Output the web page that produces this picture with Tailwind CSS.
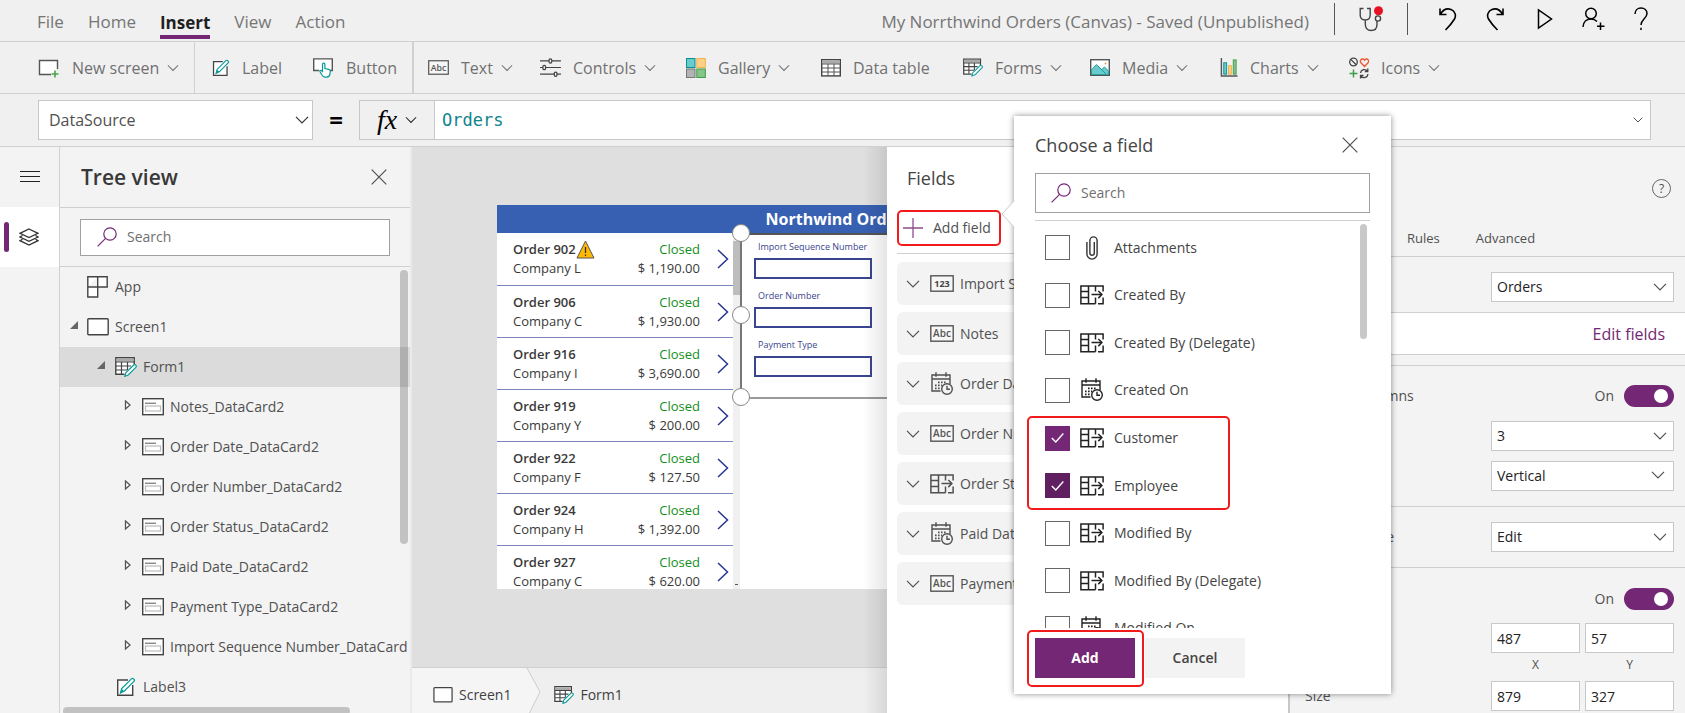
<!DOCTYPE html>
<html lang="en">
<head>
<meta charset="utf-8">
<title>My Norrthwind Orders (Canvas)</title>
<script src="https://cdn.jsdelivr.net/npm/@tailwindcss/browser@4"></script>
</head>
<body class="relative flex h-screen flex-col overflow-hidden bg-[#f0f0f0] font-['Open_Sans','Noto_Sans',sans-serif] text-sm text-[#505050]">

<svg class="hidden" aria-hidden="true">
  <symbol id="chev" viewBox="0 0 14 8"><path d="M1 .8l6 6 6-6" fill="none" stroke="currentColor" stroke-width="1.2"/></symbol>
  <symbol id="x" viewBox="0 0 16 16"><path d="M.7.7l14.6 14.6M15.3.7L.7 15.3" fill="none" stroke="currentColor" stroke-width="1.2"/></symbol>
  <symbol id="glass" viewBox="0 0 20 20"><g fill="none" stroke="#742774" stroke-width="1.2"><circle cx="13" cy="7" r="6.2"/><path d="M8.6 11.4L.6 19.4"/></g></symbol>
  <symbol id="screen" viewBox="0 0 22 18"><rect x=".8" y=".8" width="20.4" height="16" rx=".8" fill="#fff" stroke="#444" stroke-width="1.4"/></symbol>
  <symbol id="newscreen" viewBox="0 0 22 20"><path d="M13 16.5H1.5V2.5h18V11" fill="#fff" stroke="#555" stroke-width="1.4"/><path d="M17 12.5v7M13.5 16h7" stroke="#4aa64a" stroke-width="1.6"/></symbol>
  <symbol id="label" viewBox="0 0 20 20"><path d="M12 3H1.7v15.3h15V8" fill="#fff" stroke="#444" stroke-width="1.4"/><path d="M4.5 16l1.2-4.4L15.4 1.9a1.5 1.5 0 0 1 2.1 0l.4.4a1.5 1.5 0 0 1 0 2.1L8.4 14z" fill="#fff" stroke="#0a9a9a" stroke-width="1.3"/><path d="M4.4 16l1.2-4 2.8 2.2z" fill="#0a9a9a"/></symbol>
  <symbol id="button" viewBox="0 0 22 20"><path d="M7 12.5H1.7V.9h18.6v11.6H17" fill="#fff" stroke="#555" stroke-width="1.4"/><path d="M10.5 13.5V6.3a1.2 1.2 0 0 1 2.4 0v4.2l4 .9c1 .2 1.5.8 1.4 1.8l-.4 3c-.3 1.900-1.600 3-3.300 3h-1.400c-1.400 0-2.200-.6-2.900-1.700l-2.400-4c-.4-.9.9-1.700 1.700-.8z" fill="#fff" stroke="#0a9a9a" stroke-width="1.2"/></symbol>
  <symbol id="abc" viewBox="0 0 24 17"><rect x=".8" y=".8" width="22.400" height="15.400" fill="#f6f6f6" stroke="#555" stroke-width="1.4"/><text x="12" y="12" text-anchor="middle" font-family="Open Sans" font-weight="600" font-size="10" fill="#555">Abc</text></symbol>
  <symbol id="num" viewBox="0 0 24 17"><rect x=".8" y=".8" width="22.400" height="15.400" fill="#f6f6f6" stroke="#555" stroke-width="1.4"/><text x="12" y="12" text-anchor="middle" font-family="Open Sans" font-weight="700" font-size="9" fill="#444">123</text></symbol>
  <symbol id="controls" viewBox="0 0 22 20"><g fill="#f0f0f0" stroke="#444" stroke-width="1.3"><path d="M0 3h22M0 10h22M0 17h22"/><rect x="9.500" y=".8" width="2.800" height="4.500" rx="1.300"/><rect x="3" y="7.800" width="2.800" height="4.500" rx="1.300"/><rect x="15" y="14.800" width="2.800" height="4.500" rx="1.300"/></g></symbol>
  <symbol id="gallery" viewBox="0 0 20 20"><g stroke-width="1"><rect x=".5" y=".5" width="8.500" height="9" fill="#69cccc" stroke="#0a8f8f"/><rect x="10.800" y=".5" width="8.500" height="9" fill="#fbd089" stroke="#f2b24d"/><rect x=".5" y="11" width="8.500" height="8.500" fill="#b3b3b3" stroke="#777"/><rect x="10.800" y="11" width="8.500" height="8.500" fill="#87c587" stroke="#3f9d4a"/></g></symbol>
  <symbol id="table" viewBox="0 0 20 18"><rect x=".7" y=".7" width="18.600" height="16.200" fill="#fff" stroke="#444" stroke-width="1.400"/><path d="M1.400 1.400h17.200v3.200H1.400z" fill="#aaa"/><path d="M1 5h18M1 9h18M1 13h18M7 5v12M13 5v12" stroke="#555" fill="none"/></symbol>
  <symbol id="form" viewBox="0 0 22 20"><path d="M9.500 17.200H.8V.8h18.400v7" fill="#fff" stroke="#444" stroke-width="1.400"/><path d="M1.500 1.500h17v3h-17z" fill="#aaa"/><path d="M1 5h18M1 9h15M1 13h11M6.500 5v12M12.500 5v8" stroke="#444" fill="none" stroke-width="1.200"/><path d="M9.800 19.300l1-3.600 7.700-7.500c.7-.7 1.700-.6 2.300 0 .6.6.6 1.500 0 2.200l-7.600 7.600z" fill="#fff" stroke="#0a9a9a" stroke-width="1.200"/></symbol>
  <symbol id="media" viewBox="0 0 20 17"><rect x=".7" y=".7" width="18.600" height="15.600" fill="#fff" stroke="#555" stroke-width="1.400"/><path d="M1.400 11L6.500 5.500l5 5 3-2.500 4.100 4v3.600H1.400z" fill="#69cccc" stroke="#0a8f8f" stroke-width=".8"/><path d="M8 7l8 8" stroke="#0a8f8f" stroke-width=".8"/><circle cx="15.500" cy="4.500" r="1" fill="#f2994d"/></symbol>
  <symbol id="charts" viewBox="0 0 18 20"><path d="M1 0v19h17" fill="none" stroke="#555" stroke-width="1.500"/><rect x="3.500" y="5" width="3" height="12" fill="#69cccc" stroke="#0a8f8f"/><rect x="8.500" y="8" width="3" height="9" fill="#fbd089" stroke="#f2b24d"/><rect x="13.500" y="2" width="3" height="15" fill="#87c587" stroke="#3f9d4a"/></symbol>
  <symbol id="icons" viewBox="0 0 20 22"><g fill="none" stroke="#444" stroke-width="1.300"><circle cx="4.500" cy="5" r="3.800"/><path d="M1.800 2.400l5.400 5.300"/><path d="M11.500 16a4 4 0 0 1 7-2M18.800 11.500v3h-3M19 17a4 4 0 0 1-7 2.300M11.500 21.500v-3h3"/></g><path d="M15.500 9.500l-3.800-4c-1-1.600.3-3.700 2-3.500.8.100 1.400.6 1.800 1.300.4-.7 1-1.200 1.800-1.300 1.700-.2 3 1.900 2 3.500z" fill="none" stroke="#f0562f" stroke-width="1.300"/><path d="M4.500 12.500v8M.5 16.500h8" stroke="#3f9d4a" stroke-width="1.500"/></symbol>
  <symbol id="card" viewBox="0 0 22 18"><rect x=".7" y=".7" width="20.600" height="16" fill="#fff" stroke="#444" stroke-width="1.400"/><path d="M3 5.300h11" stroke="#888" stroke-width="1.400"/><rect x="3.500" y="8" width="15" height="5" fill="#fff" stroke="#bbb" stroke-width="1.200"/></symbol>
  <symbol id="lookup" viewBox="0 0 24 20"><g fill="none" stroke="currentColor" stroke-width="1.500"><path d="M15.500 18.800H.9V.9h22.200v5.600M18 18.800h5.100v-6.300M1 6.500h7.500M1 12.500h7.500M8.500 1v17.500M15.500 1v5.500M15.500 12.500v6.300"/><path d="M11.500 9.500h10.300M18.300 6l3.600 3.500-3.600 3.600"/></g></symbol>
  <symbol id="date" viewBox="0 0 22 24"><g fill="none" stroke="currentColor" stroke-width="1.400"><path d="M9.500 19H1V3h18v9M1 7h18M5 .3v4.500M15 .3v4.500"/><circle cx="16" cy="17" r="5.300"/><path d="M16 13.700V17.300h3"/><path d="M7 10.300h9M4 13.300h7M4 16.300h6" stroke-dasharray="1.600 1.400" stroke-width="1.700"/></g></symbol>
  <symbol id="clip" viewBox="0 0 12 24"><path d="M8.300 6v11a2.200 2.200 0 0 1-4.400 0V4.500a3.500 3.500 0 0 1 7.200 0V18a5 5 0 0 1-10.200 0V6" fill="none" stroke="#333" stroke-width="1.400"/></symbol>
  <symbol id="closed" viewBox="0 0 8 10"><path d="M1.500 1v8L6 5z" fill="#fff" stroke="#555" stroke-width="1.300"/></symbol>
  <symbol id="open" viewBox="0 0 8 8"><path d="M8 0v8H0z" fill="#666"/></symbol>
  <symbol id="next" viewBox="0 0 12 20"><path d="M1 1l9.500 9L1 19" fill="none" stroke="#283593" stroke-width="1.500"/></symbol>
</svg>

<header class="flex h-[42px] shrink-0 items-center border-b border-[#d0d0d0] pr-9 text-[17px] text-[#757575]">
  <nav class="flex h-full items-center gap-6 pt-1 pl-[37px]">
    <button>File</button>
    <button>Home</button>
    <button class="border-b-4 border-[#742774] pt-1 leading-6 font-bold text-[#1f1f1f]">Insert</button>
    <button>View</button>
    <button>Action</button>
  </nav>
  <h1 class="ml-auto pt-1 pr-[25px]">My Norrthwind Orders (Canvas) - Saved (Unpublished)</h1>
  <div class="mb-1 flex h-8 items-center border-x border-[#555] px-6">
    <button aria-label="App checker"><svg class="h-[26px] w-6" viewBox="0 0 24 26"><g fill="none" stroke="#444" stroke-width="1.400"><path d="M4.500 2.500H1.200V9c0 3 2 5 5 5s5-2 5-5V2.500H8M6.300 14v4c0 4 2 6.500 5.800 6.500S18 22 18 18.500V15"/><circle cx="19" cy="12.500" r="2.600"/></g><circle cx="19.500" cy="4.800" r="4.500" fill="#e81123"/></svg></button>
  </div>
  <div class="mb-1 flex items-center gap-[29px] pr-px pl-[31px] text-black">
    <button aria-label="Undo"><svg class="h-6 w-[18px]" viewBox="0 0 18 24" fill="none" stroke="currentColor" stroke-width="1.600"><path d="M1 1.500V7.500h6.500M1.500 7C4 3 8 1 12 2.500c4 1.500 5.500 6 3.500 9.500-1.500 2.500-5 7-9 11"/></svg></button>
    <button aria-label="Redo"><svg class="h-6 w-[18px]" viewBox="0 0 18 24" fill="none" stroke="currentColor" stroke-width="1.600"><path d="M17 1.500V7.500h-6.500M16.500 7C14 3 10 1 6 2.500 2 4 .5 8.500 2.500 12c1.500 2.500 5 7 9 11"/></svg></button>
    <button aria-label="Play"><svg class="ml-1 h-6 w-4" viewBox="0 0 16 24" fill="none" stroke="currentColor" stroke-width="1.500"><path d="M1.500 3v18L14.500 12z"/></svg></button>
    <button aria-label="Share"><svg class="h-6 w-[23px]" viewBox="0 0 23 24" fill="none" stroke="currentColor" stroke-width="1.500"><circle cx="9" cy="6.500" r="5.300"/><path d="M1 20c.3-5 3.500-8 8-8 2.500 0 4.500.9 6 2.500M18.500 15.500v7.500M15 19.300h7.500"/></svg></button>
    <button aria-label="Help"><svg class="h-6 w-[14px]" viewBox="0 0 14 24" fill="none" stroke="currentColor" stroke-width="1.500"><path d="M1 7C1 3.500 3.500 1 7 1s6 2.200 6 5.500c0 5-6 5.500-6 11.500M7 20.800v2.200"/></svg></button>
  </div>
</header>

<div class="flex h-[52px] shrink-0 items-center border-b border-[#d0d0d0] pl-[38px] text-base text-[#707070]">
  <button class="flex w-[156px] shrink-0 items-center gap-3"><svg class="h-5 w-[22px]"><use href="#newscreen"/></svg><span>New screen</span><svg class="-ml-1 h-2 w-3"><use href="#chev"/></svg></button>
  <span class="h-full w-[18px] border-l border-[#d0d0d0]"></span>
  <button class="flex w-[100px] shrink-0 items-center gap-3"><svg class="h-[18px] w-[18px]"><use href="#label"/></svg>Label</button>
  <button class="flex w-[100px] shrink-0 items-center gap-3"><svg class="h-5 w-[22px]"><use href="#button"/></svg>Button</button>
  <span class="h-full w-4 border-l-2 border-[#d0d0d0]"></span>
  <button class="flex w-[112px] shrink-0 items-center gap-3"><svg class="h-[15px] w-[21px]"><use href="#abc"/></svg><span>Text</span><svg class="-ml-1 h-2 w-3"><use href="#chev"/></svg></button>
  <button class="flex w-[146px] shrink-0 items-center gap-3"><svg class="h-[19px] w-[21px]"><use href="#controls"/></svg><span>Controls</span><svg class="-ml-1 h-2 w-3"><use href="#chev"/></svg></button>
  <button class="flex w-[135px] shrink-0 items-center gap-3"><svg class="h-5 w-5"><use href="#gallery"/></svg><span>Gallery</span><svg class="-ml-1 h-2 w-3"><use href="#chev"/></svg></button>
  <button class="flex w-[142px] shrink-0 items-center gap-3"><svg class="h-[18px] w-5"><use href="#table"/></svg>Data table</button>
  <button class="flex w-[127px] shrink-0 items-center gap-3"><svg class="h-[19px] w-5"><use href="#form"/></svg><span>Forms</span><svg class="-ml-1 h-2 w-3"><use href="#chev"/></svg></button>
  <button class="flex w-[130px] shrink-0 items-center gap-3"><svg class="h-[17px] w-5"><use href="#media"/></svg><span>Media</span><svg class="-ml-1 h-2 w-3"><use href="#chev"/></svg></button>
  <button class="flex w-[129px] shrink-0 items-center gap-3"><svg class="h-[19px] w-[18px]"><use href="#charts"/></svg><span>Charts</span><svg class="-ml-1 h-2 w-3"><use href="#chev"/></svg></button>
  <button class="flex shrink-0 items-center gap-3"><svg class="h-[22px] w-5"><use href="#icons"/></svg><span>Icons</span><svg class="-ml-1 h-2 w-3"><use href="#chev"/></svg></button>
</div>

<div class="flex h-[53px] shrink-0 items-center border-b border-[#d0d0d0] pr-[34px] pl-[38px]">
  <div class="relative w-[275px] shrink-0">
    <select aria-label="Property" class="h-10 w-full appearance-none border border-[#c8c8c8] bg-white px-[10px] text-base text-[#505050]"><option>DataSource</option></select>
    <svg class="pointer-events-none absolute top-4 right-1 h-2 w-[14px] text-[#333]"><use href="#chev"/></svg>
  </div>
  <span class="w-[46px] shrink-0 text-center text-2xl font-bold text-black">=</span>
  <button aria-label="Function" class="flex h-10 w-[76px] shrink-0 items-center justify-center gap-2 border border-[#c8c8c8]"><span class="font-['Liberation_Serif',serif] text-[28px] leading-8 text-black italic">fx</span><svg class="h-2 w-3 text-[#222]"><use href="#chev"/></svg></button>
  <div class="relative flex-1">
    <input aria-label="Formula" value="Orders" class="h-10 w-full border border-l-0 border-[#c8c8c8] bg-white pr-8 pl-[7px] font-['DejaVu_Sans_Mono',monospace] text-[17px] text-[#0f858c]">
    <svg class="pointer-events-none absolute top-4 right-2 h-2 w-[10px] text-[#333]"><use href="#chev"/></svg>
  </div>
</div>

<main class="relative flex min-h-0 flex-1">
  <nav class="flex w-[60px] shrink-0 flex-col border-r border-[#d0d0d0] bg-[#f3f3f3]">
    <button aria-label="Menu" class="flex h-[60px] items-center justify-center"><svg class="h-3 w-5" viewBox="0 0 20 12"><path d="M0 .5h20M0 5.500h20M0 10.500h20" stroke="#222" stroke-width="1"/></svg></button>
    <button aria-label="Tree view" class="flex h-[60px] items-center gap-[10px] bg-white pl-1"><span class="h-[30px] w-[5px] rounded-full bg-[#742774]"></span><svg class="h-[18px] w-5" viewBox="0 0 20 18"><g fill="none" stroke="#333" stroke-width="1.300"><path d="M10 1l9 4.300-9 4.300-9-4.300zM3.500 7.500L1 9l9 4.300L19 9l-2.500-1.500M3.500 11.200L1 12.700 10 17l9-4.300-2.500-1.500"/></g></svg></button>
  </nav>

  <aside class="relative flex w-[352px] shrink-0 flex-col overflow-hidden border-r-2 border-[#eaeaea] bg-[#f3f3f3]">
    <div class="flex h-[61px] shrink-0 items-center justify-between border-b border-[#d0d0d0] pr-[23px] pl-[21px]">
      <h2 class="text-[21px] font-semibold text-[#383838]">Tree view</h2>
      <button aria-label="Close"><svg class="h-4 w-4"><use href="#x"/></svg></button>
    </div>
    <div class="flex h-[59px] shrink-0 items-center border-b border-[#d0d0d0] px-5">
      <label class="flex h-[37px] flex-1 items-center gap-[10px] border border-[#a0a0a0] bg-white pl-4"><svg class="h-5 w-5"><use href="#glass"/></svg><input aria-label="Search tree" placeholder="Search" class="min-w-0 flex-1 placeholder:text-[#707070]"></label>
    </div>
    <ul class="whitespace-nowrap">
      <li class="flex h-10 items-center gap-[7px] pl-[27px]"><svg class="h-[22px] w-[21px]" viewBox="0 0 21 22"><path d="M.8.8h19.400v10.200H.8zM.8 11v10h9.900V.8" fill="#fff" stroke="#444" stroke-width="1.400"/></svg>App</li>
      <li class="flex h-10 items-center gap-[6px] pl-[10px]"><svg class="mr-[3px] mb-1 h-2 w-2"><use href="#open"/></svg><svg class="h-[18px] w-[22px]"><use href="#screen"/></svg>Screen1</li>
      <li class="flex h-10 items-center gap-[6px] bg-[#dbdbdb] pl-[37px]"><svg class="mr-[4px] mb-1 h-2 w-2"><use href="#open"/></svg><svg class="h-5 w-[22px]"><use href="#form"/></svg>Form1</li>
      <li class="flex h-10 items-center gap-[6px] pl-16"><svg class="mr-1 mb-1 h-[10px] w-2"><use href="#closed"/></svg><svg class="h-[18px] w-[22px] shrink-0"><use href="#card"/></svg>Notes_DataCard2</li>
      <li class="flex h-10 items-center gap-[6px] pl-16"><svg class="mr-1 mb-1 h-[10px] w-2"><use href="#closed"/></svg><svg class="h-[18px] w-[22px] shrink-0"><use href="#card"/></svg>Order Date_DataCard2</li>
      <li class="flex h-10 items-center gap-[6px] pl-16"><svg class="mr-1 mb-1 h-[10px] w-2"><use href="#closed"/></svg><svg class="h-[18px] w-[22px] shrink-0"><use href="#card"/></svg>Order Number_DataCard2</li>
      <li class="flex h-10 items-center gap-[6px] pl-16"><svg class="mr-1 mb-1 h-[10px] w-2"><use href="#closed"/></svg><svg class="h-[18px] w-[22px] shrink-0"><use href="#card"/></svg>Order Status_DataCard2</li>
      <li class="flex h-10 items-center gap-[6px] pl-16"><svg class="mr-1 mb-1 h-[10px] w-2"><use href="#closed"/></svg><svg class="h-[18px] w-[22px] shrink-0"><use href="#card"/></svg>Paid Date_DataCard2</li>
      <li class="flex h-10 items-center gap-[6px] pl-16"><svg class="mr-1 mb-1 h-[10px] w-2"><use href="#closed"/></svg><svg class="h-[18px] w-[22px] shrink-0"><use href="#card"/></svg>Payment Type_DataCard2</li>
      <li class="flex h-10 items-center gap-[6px] pr-[3px] pl-16"><svg class="mr-1 mb-1 h-[10px] w-2 shrink-0"><use href="#closed"/></svg><svg class="h-[18px] w-[22px] shrink-0"><use href="#card"/></svg><span class="min-w-0 flex-1 overflow-hidden">Import Sequence Number_DataCard2</span></li>
      <li class="flex h-10 items-center gap-[7px] pl-14"><svg class="h-5 w-5"><use href="#label"/></svg>Label3</li>
    </ul>
    <span class="absolute top-[123px] right-[2px] h-[274px] w-2 rounded-full bg-black/20"></span>
    <span class="absolute bottom-[-2px] left-[3px] h-2 w-[287px] rounded-full bg-[#c2c2c2]"></span>
  </aside>

  <section class="relative flex min-w-0 flex-1 flex-col overflow-hidden bg-[#dfdfdf]">
    <div class="min-h-0 flex-1 overflow-hidden pt-[58px] pl-[85px]">
      <div class="flex h-[384px] w-[683px] flex-col overflow-hidden bg-white text-[13px]">
        <h2 class="h-7 shrink-0 bg-[#3860b2] text-center text-base leading-7 font-bold text-white">Northwind Orders</h2>
        <div class="flex min-h-0 flex-1">
          <ul class="w-[236px] shrink-0 leading-[19px] text-[#3a3a3a]">
            <li class="flex h-[53px] items-center border-b border-[#7a86bd] pr-1 pl-4"><div class="flex-1"><div class="flex h-[19px] items-center font-semibold">Order 902<svg class="h-[19px] w-[19px]" viewBox="0 0 19 19"><path d="M9.500 1L18 18H1z" fill="#ffb900" stroke="#555"/><path d="M9.500 7v6M9.500 14.500v1.500" stroke="#333" stroke-width="1.300"/></svg></div>Company L</div><div class="pr-[17px] text-right"><div class="text-[#13901a]">Closed</div>$ 1,190.00</div><svg class="h-5 w-3"><use href="#next"/></svg></li>
            <li class="flex h-[52px] items-center border-b border-[#7a86bd] pr-1 pl-4"><div class="flex-1"><div class="font-semibold">Order 906</div>Company C</div><div class="pr-[17px] text-right"><div class="text-[#13901a]">Closed</div>$ 1,930.00</div><svg class="h-5 w-3"><use href="#next"/></svg></li>
            <li class="flex h-[52px] items-center border-b border-[#7a86bd] pr-1 pl-4"><div class="flex-1"><div class="font-semibold">Order 916</div>Company I</div><div class="pr-[17px] text-right"><div class="text-[#13901a]">Closed</div>$ 3,690.00</div><svg class="h-5 w-3"><use href="#next"/></svg></li>
            <li class="flex h-[52px] items-center border-b border-[#7a86bd] pr-1 pl-4"><div class="flex-1"><div class="font-semibold">Order 919</div>Company Y</div><div class="pr-[17px] text-right"><div class="text-[#13901a]">Closed</div>$ 200.00</div><svg class="h-5 w-3"><use href="#next"/></svg></li>
            <li class="flex h-[52px] items-center border-b border-[#7a86bd] pr-1 pl-4"><div class="flex-1"><div class="font-semibold">Order 922</div>Company F</div><div class="pr-[17px] text-right"><div class="text-[#13901a]">Closed</div>$ 127.50</div><svg class="h-5 w-3"><use href="#next"/></svg></li>
            <li class="flex h-[52px] items-center border-b border-[#7a86bd] pr-1 pl-4"><div class="flex-1"><div class="font-semibold">Order 924</div>Company H</div><div class="pr-[17px] text-right"><div class="text-[#13901a]">Closed</div>$ 1,392.00</div><svg class="h-5 w-3"><use href="#next"/></svg></li>
            <li class="flex h-[52px] items-center border-b border-[#7a86bd] pr-1 pl-4"><div class="flex-1"><div class="font-semibold">Order 927</div>Company C</div><div class="pr-[17px] text-right"><div class="text-[#13901a]">Closed</div>$ 620.00</div><svg class="h-5 w-3"><use href="#next"/></svg></li>
          </ul>
          <div class="flex w-[7px] shrink-0 flex-col justify-between bg-[#f0f0f0] pt-2"><span class="h-[54px] bg-[#bdbdbd]"></span><span class="mx-auto mb-[4px] h-px w-[3px] bg-[#555]"></span></div>
          <div class="relative flex h-[166px] flex-1 flex-col border-y-2 border-l-2 border-[#9a9a9a] border-t-[#555] border-l-[#777] pt-[5px] pl-3 text-[9px] text-[#3a4590]">
            <label class="flex h-[49px] flex-col leading-[14px]"><span class="pl-1">Import Sequence Number</span><input class="mt-1 h-[21px] w-[118px] border-2 border-[#3a4590] bg-white"></label>
            <label class="flex h-[49px] flex-col leading-[14px]"><span class="pl-1">Order Number</span><input class="mt-1 h-[21px] w-[118px] border-2 border-[#3a4590] bg-white"></label>
            <label class="flex h-[49px] flex-col leading-[14px]"><span class="pl-1">Payment Type</span><input class="mt-1 h-[21px] w-[118px] border-2 border-[#3a4590] bg-white"></label>
          </div>
        </div>
      </div>
    </div>
    <!-- resize handles of the selected form -->
    <span class="absolute top-[77px] left-[320px] h-[18px] w-[18px] rounded-full border border-[#888] bg-white"></span>
    <span class="absolute top-[159px] left-[320px] h-[18px] w-[18px] rounded-full border border-[#888] bg-white"></span>
    <span class="absolute top-[241px] left-[320px] h-[18px] w-[18px] rounded-full border border-[#888] bg-white"></span>
    <div class="flex h-[46px] shrink-0 items-center overflow-hidden border-t border-[#cfcfcf] bg-[#efefef] pt-2 text-[#404040]">
      <a href="#" class="-mt-2 flex h-[46px] items-center gap-[6px] bg-[#f5f5f5] pt-2 pl-[21px]"><svg class="h-4 w-5"><use href="#screen"/></svg>Screen1</a>
      <svg class="-mt-2 h-[46px] w-[30px]" viewBox="0 0 30 46"><path d="M0 0h16l13 24-11 22H0z" fill="#f5f5f5"/><path d="M16 0l13 24-11 22" fill="none" stroke="#ccc"/></svg>
      <a href="#" class="flex items-center gap-[6px] pl-[13px]"><svg class="h-[18px] w-5"><use href="#form"/></svg>Form1</a>
    </div>
    <span class="pointer-events-none absolute inset-y-0 right-0 w-6 bg-linear-to-l from-black/10 to-transparent"></span>
  </section>

  <section class="w-[401px] shrink-0 bg-white pl-[10px]">
    <h2 class="pt-[17px] pl-[10px] text-lg leading-7 text-[#444]">Fields</h2>
    <button class="mt-[18px] flex h-9 w-[104px] items-center gap-[10px] rounded-[5px] border-2 border-[#f21b1b] pl-1 whitespace-nowrap"><svg class="h-5 w-5" viewBox="0 0 20 20"><path d="M10 0v20M0 10h20" stroke="#8e4d8e" stroke-width="1.300"/></svg>Add field</button>
    <ul class="mt-[7px] flex flex-col gap-[7px] border-t border-[#d0d0d0] pt-2 whitespace-nowrap">
      <li class="flex h-[43px] items-center gap-[6px] rounded-md bg-[#f3f3f3] pl-[9px]"><svg class="mr-1 h-2 w-[14px]"><use href="#chev"/></svg><svg class="h-[17px] w-6"><use href="#num"/></svg>Import Sequence Number</li>
      <li class="flex h-[43px] items-center gap-[6px] rounded-md bg-[#f3f3f3] pl-[9px]"><svg class="mr-1 h-2 w-[14px]"><use href="#chev"/></svg><svg class="h-[17px] w-6"><use href="#abc"/></svg>Notes</li>
      <li class="flex h-[43px] items-center gap-[6px] rounded-md bg-[#f3f3f3] pl-[9px]"><svg class="mr-1 h-2 w-[14px]"><use href="#chev"/></svg><svg class="h-6 w-6"><use href="#date"/></svg>Order Date</li>
      <li class="flex h-[43px] items-center gap-[6px] rounded-md bg-[#f3f3f3] pl-[9px]"><svg class="mr-1 h-2 w-[14px]"><use href="#chev"/></svg><svg class="h-[17px] w-6"><use href="#abc"/></svg>Order Number</li>
      <li class="flex h-[43px] items-center gap-[6px] rounded-md bg-[#f3f3f3] pl-[9px]"><svg class="mr-1 h-2 w-[14px]"><use href="#chev"/></svg><svg class="h-5 w-6"><use href="#lookup"/></svg>Order Status</li>
      <li class="flex h-[43px] items-center gap-[6px] rounded-md bg-[#f3f3f3] pl-[9px]"><svg class="mr-1 h-2 w-[14px]"><use href="#chev"/></svg><svg class="h-6 w-6"><use href="#date"/></svg>Paid Date</li>
      <li class="flex h-[43px] items-center gap-[6px] rounded-md bg-[#f3f3f3] pl-[9px]"><svg class="mr-1 h-2 w-[14px]"><use href="#chev"/></svg><svg class="h-[17px] w-6"><use href="#abc"/></svg>Payment Type</li>
    </ul>
  </section>

  <aside class="w-[397px] shrink-0 overflow-hidden border-l-2 border-[#c8c8c8] bg-[#f3f3f3]">
    <div class="flex h-[110px] flex-col justify-between border-b border-[#cfcfcf] pt-8 pb-[7px]">
      <button aria-label="Help" class="mr-[14px] flex h-[19px] w-[19px] items-center justify-center self-end rounded-full border border-[#666] text-xs">?</button>
      <div class="flex gap-9 pl-[117px] text-[13px] leading-[22px]"><button>Rules</button><button>Advanced</button></div>
    </div>
    <div class="flex h-14 items-center justify-end border-b border-[#cfcfcf] pt-1 pr-[11px]">
      <div class="relative w-[183px]"><select aria-label="Data source" class="h-[30px] w-full appearance-none border border-[#c8c8c8] bg-white px-[5px] text-[#222]"><option>Orders</option></select><svg class="pointer-events-none absolute top-[11px] right-[7px] h-2 w-[14px]"><use href="#chev"/></svg></div>
    </div>
    <div class="flex h-[42px] items-center justify-end border-b border-[#cfcfcf] bg-white pr-5"><button class="text-base text-[#742774]">Edit fields</button></div>
    <div class="mt-[10px] border-y border-[#cfcfcf] pt-[19px] pr-[11px] pb-[15px] pl-[15px]">
      <label class="flex h-[22px] items-center"><span class="flex-1">Snap to columns</span>On<input type="checkbox" role="switch" checked class="relative ml-[10px] h-[22px] w-[50px] appearance-none rounded-full bg-[#742774] before:absolute before:top-1 before:right-[6px] before:h-[14px] before:w-[14px] before:rounded-full before:bg-white before:content-['']"></label>
      <div class="relative mt-[14px] ml-auto w-[183px]"><select aria-label="Columns" class="h-[30px] w-full appearance-none border border-[#c8c8c8] bg-white px-[5px] text-[#222]"><option>3</option></select><svg class="pointer-events-none absolute top-[11px] right-[7px] h-2 w-[14px]"><use href="#chev"/></svg></div>
      <div class="relative mt-[10px] ml-auto w-[183px]"><select aria-label="Layout" class="h-[30px] w-full appearance-none border border-[#c8c8c8] bg-white px-[5px] text-[#222]"><option>Vertical</option></select><svg class="pointer-events-none absolute top-[10px] right-[9px] h-2 w-[14px]"><use href="#chev"/></svg></div>
    </div>
    <div class="flex h-[61px] items-center border-b border-[#cfcfcf] pr-[11px] pl-[15px]"><label for="mode" class="flex-1">Default mode</label>
      <div class="relative w-[183px]"><select id="mode" class="h-[30px] w-full appearance-none border border-[#c8c8c8] bg-white px-[5px] text-[#222]"><option>Edit</option></select><svg class="pointer-events-none absolute top-[11px] right-[7px] h-2 w-[14px]"><use href="#chev"/></svg></div>
    </div>
    <div class="pt-[20px] pr-[11px] pl-[15px]">
      <label class="flex h-[22px] items-center justify-end">On<input type="checkbox" role="switch" checked class="relative ml-[10px] h-[22px] w-[50px] appearance-none rounded-full bg-[#742774] before:absolute before:top-1 before:right-[6px] before:h-[14px] before:w-[14px] before:rounded-full before:bg-white before:content-['']"></label>
      <div class="mt-[13px] ml-auto grid w-[183px] grid-cols-2 gap-x-[5px] text-center">
        <input id="px" value="487" class="h-[30px] w-full border border-[#c8c8c8] bg-white px-[5px] text-[#222]"><input id="py" value="57" class="h-[30px] w-full border border-[#c8c8c8] bg-white px-[5px] text-[#222]">
        <label for="px" class="h-7 text-xs leading-6">X</label><label for="py" class="h-7 text-xs leading-6">Y</label>
      </div>
      <div class="flex items-center"><span class="flex-1">Size</span><div class="grid w-[183px] grid-cols-2 gap-x-[5px]"><input aria-label="Width" value="879" class="h-[30px] w-full border border-[#c8c8c8] bg-white px-[5px] text-[#222]"><input aria-label="Height" value="327" class="h-[30px] w-full border border-[#c8c8c8] bg-white px-[5px] text-[#222]"></div></div>
    </div>
  </aside>

  <!-- field picker callout -->
  <div role="dialog" aria-label="Choose a field" class="absolute top-[-31px] right-[294px] flex h-[578px] w-[377px] flex-col bg-white px-[21px] shadow-[0_0_6px_rgba(0,0,0,0.45)]">
    <svg class="absolute top-[84px] left-[-13px] h-[28px] w-[14px]" viewBox="0 0 14 28"><path d="M14 0L1 14l13 14z" fill="#fff"/><path d="M13 1L1 14l12 13" fill="none" stroke="#ccc"/></svg>
    <div class="flex h-[57px] shrink-0 items-center justify-between pr-[12px]"><h2 class="text-lg text-[#444]">Choose a field</h2><button aria-label="Close"><svg class="h-4 w-4"><use href="#x"/></svg></button></div>
    <label class="flex h-10 shrink-0 items-center gap-[10px] border border-[#a0a0a0] bg-white pl-[15px]"><svg class="h-5 w-5"><use href="#glass"/></svg><input aria-label="Search fields" placeholder="Search" class="min-w-0 flex-1 placeholder:text-[#707070]"></label>
    <div class="relative mt-[7px] h-[408px] shrink-0 overflow-hidden border-t border-[#cfcfcf]">
      <div class="flex h-[431px] flex-col pt-[3px] pl-[10px] text-[#444]">
        <label class="flex flex-1 items-center"><input type="checkbox" class="h-[25px] w-[25px] appearance-none border border-[#666] bg-white"><span class="flex w-[44px] justify-center"><svg class="h-6 w-3"><use href="#clip"/></svg></span>Attachments</label>
        <label class="flex flex-1 items-center"><input type="checkbox" class="h-[25px] w-[25px] appearance-none border border-[#666] bg-white"><span class="flex w-[44px] justify-center text-[#222]"><svg class="h-5 w-6"><use href="#lookup"/></svg></span>Created By</label>
        <label class="flex flex-1 items-center"><input type="checkbox" class="h-[25px] w-[25px] appearance-none border border-[#666] bg-white"><span class="flex w-[44px] justify-center text-[#222]"><svg class="h-5 w-6"><use href="#lookup"/></svg></span>Created By (Delegate)</label>
        <label class="flex flex-1 items-center"><input type="checkbox" class="h-[25px] w-[25px] appearance-none border border-[#666] bg-white"><span class="flex w-[44px] justify-center text-[#222]"><svg class="h-6 w-6"><use href="#date"/></svg></span>Created On</label>
        <label class="relative flex flex-1 items-center"><input type="checkbox" checked class="h-[25px] w-[25px] appearance-none bg-[#742774]"><svg class="pointer-events-none absolute left-[6px] h-3 w-[13px]" viewBox="0 0 13 12"><path d="M.8 6l4 4L12.300 1.500" fill="none" stroke="#fff" stroke-width="1.400"/></svg><span class="flex w-[44px] justify-center text-[#222]"><svg class="h-5 w-6"><use href="#lookup"/></svg></span>Customer</label>
        <label class="relative flex flex-1 items-center"><input type="checkbox" checked class="h-[25px] w-[25px] appearance-none bg-[#5f1f60]"><svg class="pointer-events-none absolute left-[6px] h-3 w-[13px]" viewBox="0 0 13 12"><path d="M.8 6l4 4L12.300 1.500" fill="none" stroke="#fff" stroke-width="1.400"/></svg><span class="flex w-[44px] justify-center text-[#222]"><svg class="h-5 w-6"><use href="#lookup"/></svg></span>Employee</label>
        <label class="flex flex-1 items-center"><input type="checkbox" class="h-[25px] w-[25px] appearance-none border border-[#666] bg-white"><span class="flex w-[44px] justify-center text-[#222]"><svg class="h-5 w-6"><use href="#lookup"/></svg></span>Modified By</label>
        <label class="flex flex-1 items-center"><input type="checkbox" class="h-[25px] w-[25px] appearance-none border border-[#666] bg-white"><span class="flex w-[44px] justify-center text-[#222]"><svg class="h-5 w-6"><use href="#lookup"/></svg></span>Modified By (Delegate)</label>
        <label class="flex flex-1 items-center"><input type="checkbox" class="h-[25px] w-[25px] appearance-none border border-[#666] bg-white"><span class="flex w-[44px] justify-center text-[#222]"><svg class="h-6 w-6"><use href="#date"/></svg></span>Modified On</label>
      </div>
      <span class="absolute top-[3px] right-[3px] h-[115px] w-[7px] rounded-full bg-[#c8c8c8]"></span>
    </div>
    <div class="mt-[10px] flex gap-[10px]">
      <button class="h-10 w-[100px] bg-[#742774] font-bold text-white">Add</button>
      <button class="h-10 w-[100px] bg-[#f3f3f3] font-semibold text-[#444]">Cancel</button>
    </div>
    <span class="pointer-events-none absolute top-[300px] left-[13px] h-[94px] w-[203px] rounded-[5px] border-2 border-[#f21b1b]"></span>
    <span class="pointer-events-none absolute top-[514px] left-[13px] h-[57px] w-[117px] rounded-[5px] border-2 border-[#f21b1b]"></span>
  </div>
</main>
</body>
</html>
